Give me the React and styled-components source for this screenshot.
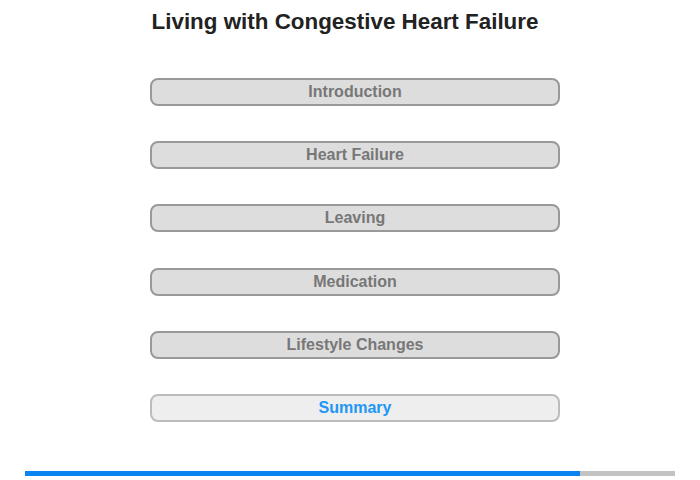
import styled, { createGlobalStyle } from 'styled-components';

const GlobalStyle = createGlobalStyle`
	html, body {
		margin: 0;
		padding: 0;
		background: #fff;
		font-family: 'Liberation Sans', Arial, sans-serif;
	}
`;

const Page = styled.div`
	width: 700px;
	height: 480px;
	display: flex;
	flex-direction: column;
	overflow: hidden;
`;

const Title = styled.h1`
	margin: 0;
	padding: 9px 10px 0 0;
	height: 31px;
	line-height: 26px;
	text-align: center;
	font-size: 22.4px;
	font-weight: bold;
	color: #222;
`;

const Menu = styled.nav`
	display: flex;
	flex-direction: column;
	gap: 35.2px;
	margin: 38px 0 0 150px;
	width: 410px;
`;

const MenuButton = styled.button`
	height: 28px;
	box-sizing: border-box;
	border-radius: 8px;
	border: 2px solid ${(p) => (p.$active ? '#bcbcbc' : '#999')};
	background: ${(p) => (p.$active ? '#eee' : '#ddd')};
	color: ${(p) => (p.$active ? '#2196f3' : '#777')};
	font-family: 'Liberation Sans', Arial, sans-serif;
	font-size: 16px;
	font-weight: bold;
	padding: 0;
	cursor: pointer;
`;

const Progress = styled.div`
	margin: 49px 0 0 25px;
	width: 650px;
	height: 5px;
	background: #c3c3c3;
	display: flex;
`;

const ProgressFill = styled.div`
	height: 100%;
	background: #0a84f0;
`;

const sections = ['Introduction', 'Heart Failure', 'Leaving', 'Medication', 'Lifestyle Changes', 'Summary'];

export default function App() {
	const current = 5;
	return (
		<>
			<GlobalStyle />
			<Page>
				<Title>Living with Congestive Heart Failure</Title>
				<Menu>
					{sections.map((s, i) => (
						<MenuButton key={s} $active={i === current}>
							{s}
						</MenuButton>
					))}
				</Menu>
				<Progress>
					<ProgressFill style={{ width: `${(555 / 650) * 100}%` }} />
				</Progress>
			</Page>
		</>
	);
}
